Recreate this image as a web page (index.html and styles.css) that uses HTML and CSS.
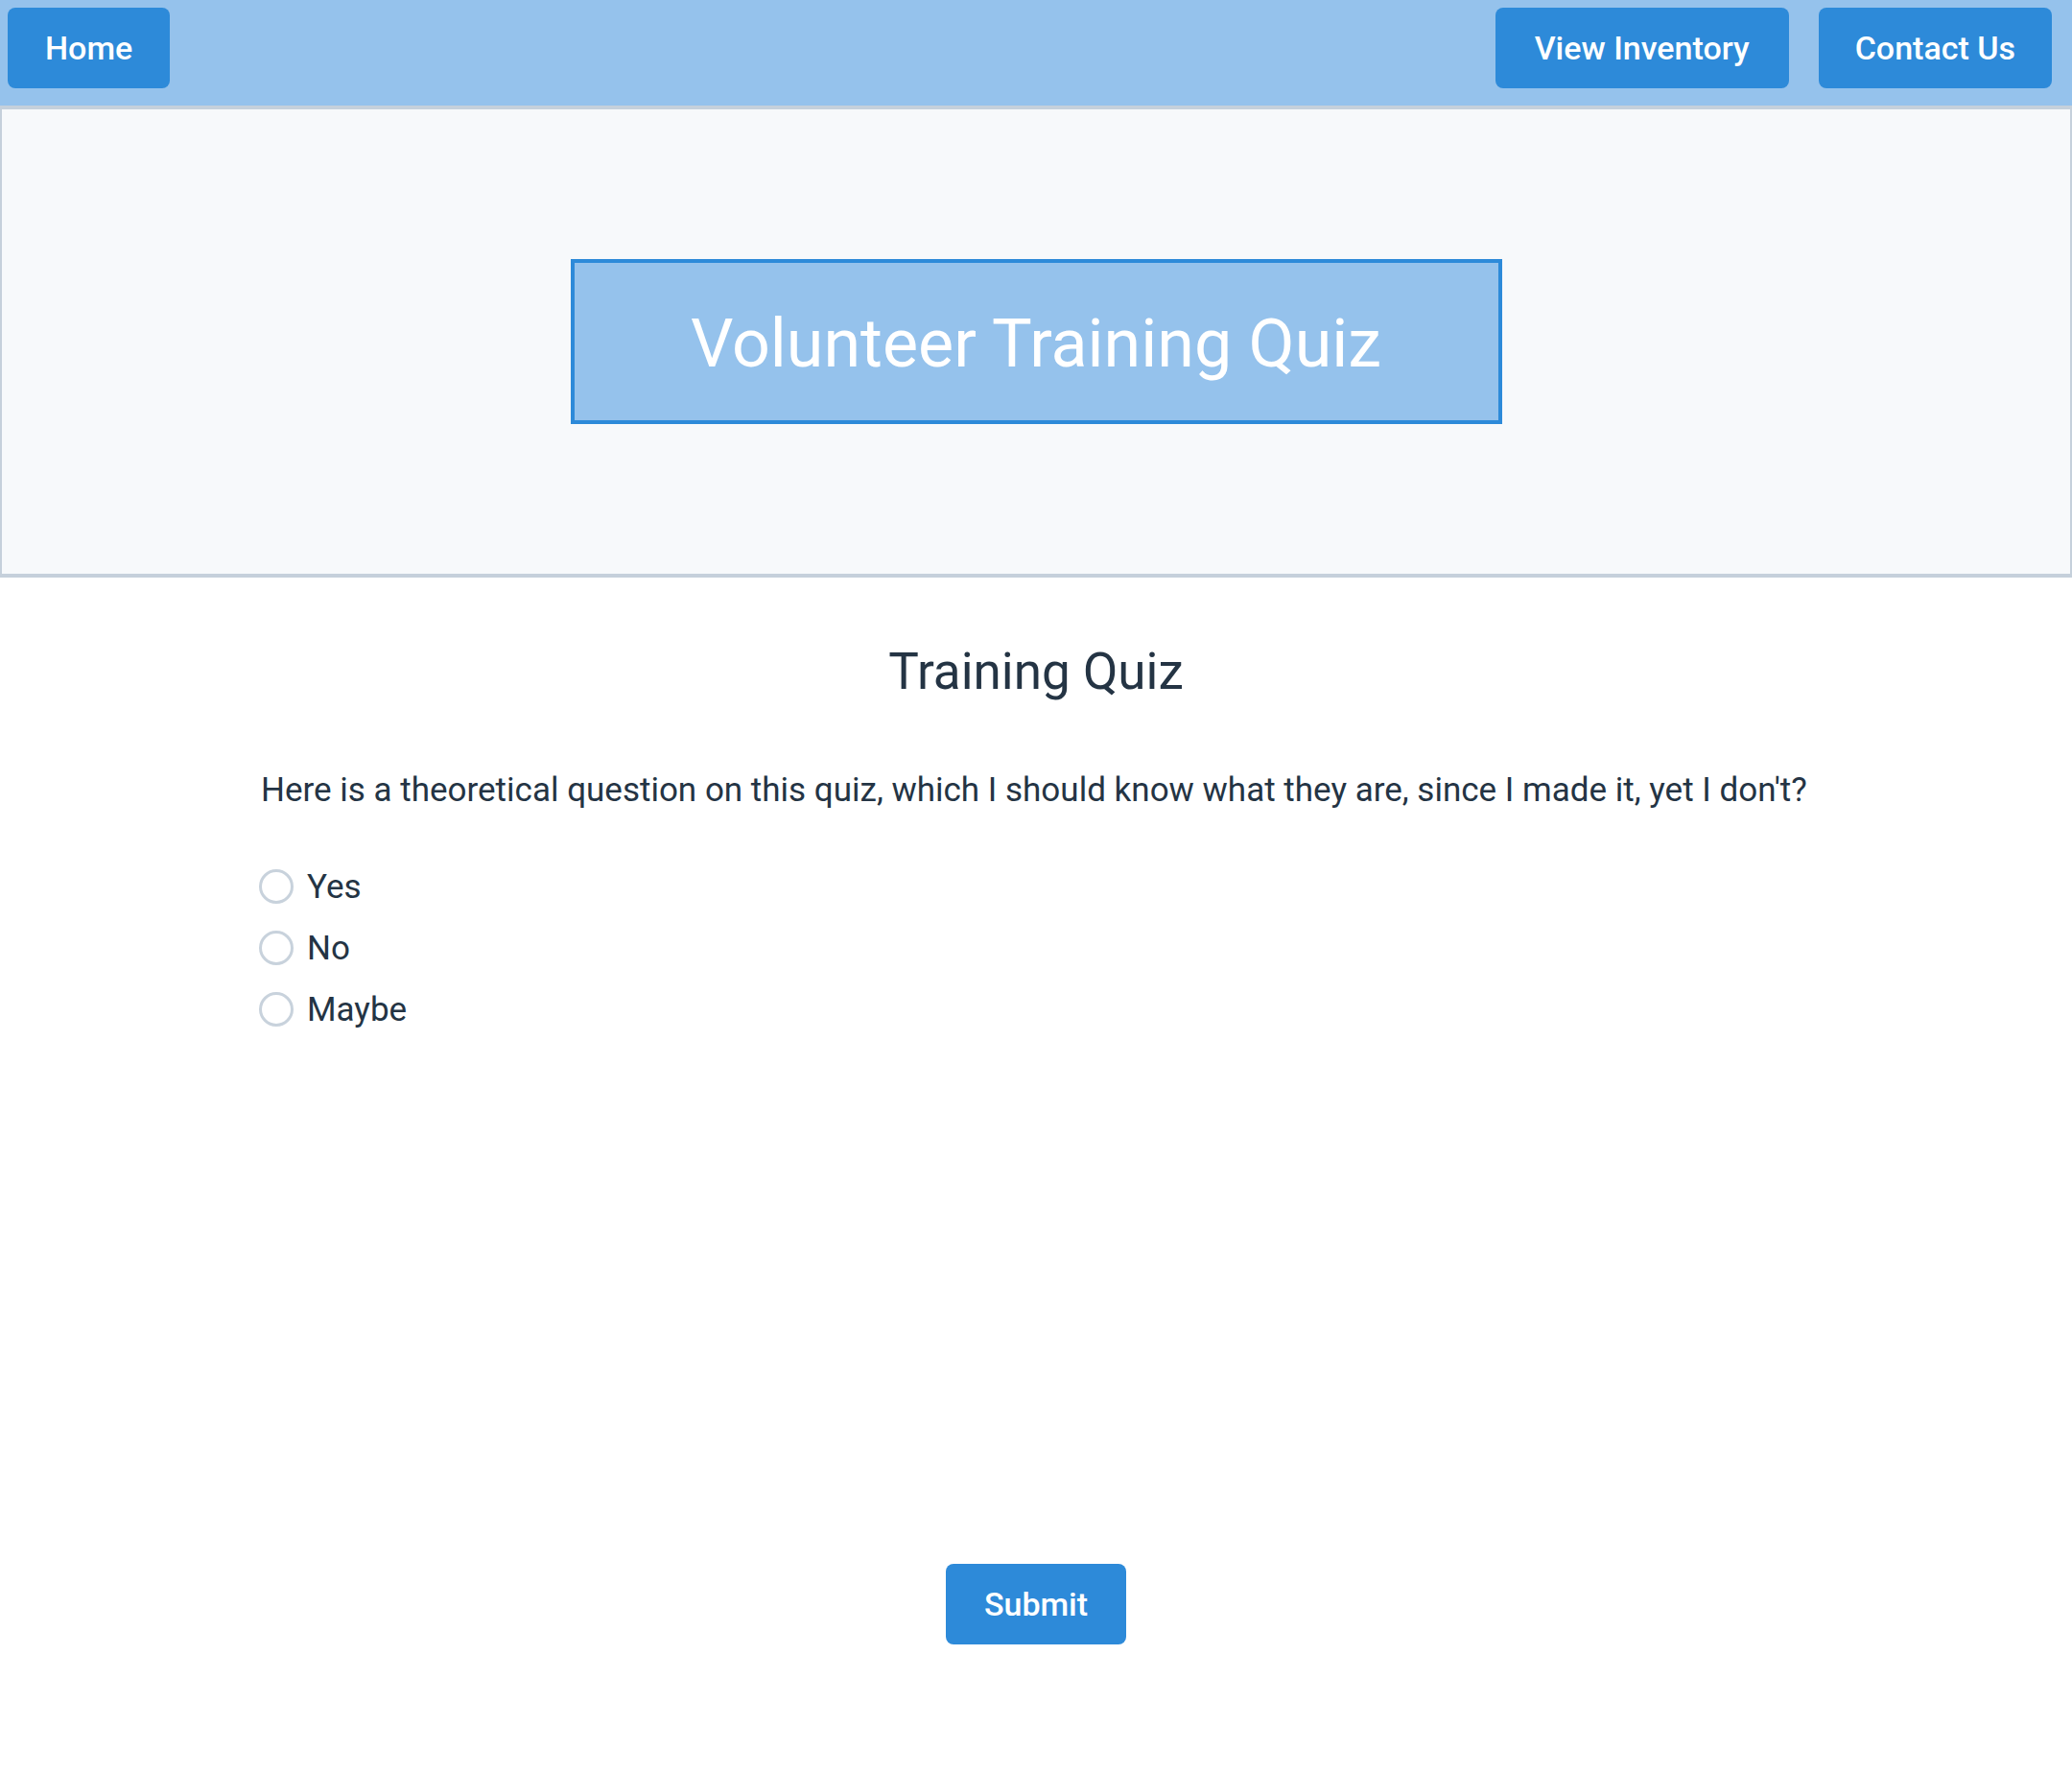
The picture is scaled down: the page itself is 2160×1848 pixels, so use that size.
FILE: index.html
```html
<!DOCTYPE html>
<html lang="en">
<head>
<meta charset="utf-8">
<title>Volunteer Training Quiz</title>
<link rel="stylesheet" href="styles.css">
</head>
<body>
<nav class="topnav">
  <a class="nav-btn nav-btn--home" href="#">Home</a>
  <div class="nav-right">
    <a class="nav-btn nav-btn--inventory" href="#">View Inventory</a>
    <a class="nav-btn nav-btn--contact" href="#">Contact Us</a>
  </div>
</nav>
<header class="hero">
  <div class="hero-title">
    <h1>Volunteer Training Quiz</h1>
  </div>
</header>
<main class="quiz">
  <h2 class="quiz-heading">Training Quiz</h2>
  <form class="quiz-form">
    <p class="question">Here is a theoretical question on this quiz, which I should know what they are, since I made it, yet I don't?</p>
    <div class="options">
      <label class="option"><input type="radio" name="q1" value="yes"><span>Yes</span></label>
      <label class="option"><input type="radio" name="q1" value="no"><span>No</span></label>
      <label class="option"><input type="radio" name="q1" value="maybe"><span>Maybe</span></label>
    </div>
    <div class="submit-row">
      <button type="button" class="submit-btn">Submit</button>
    </div>
  </form>
</main>
</body>
</html>
```

FILE: styles.css
```css
* {
  box-sizing: border-box;
}

html, body {
  margin: 0;
  padding: 0;
  background: #ffffff;
}

body {
  font-family: Roboto, "Liberation Sans", sans-serif;
  color: #243444;
  width: 2160px;
  min-height: 1848px;
}

.topnav {
  height: 110px;
  background: #95c2ec;
  display: flex;
  align-items: flex-start;
  justify-content: space-between;
  padding: 8px 21px 0 8px;
}

.nav-right {
  display: flex;
  gap: 31px;
}

.nav-btn {
  display: flex;
  align-items: center;
  justify-content: center;
  height: 84px;
  padding: 0 40px;
  background: #2d8ad9;
  color: #ffffff;
  border-radius: 8px;
  text-decoration: none;
  font-size: 34px;
  font-weight: 500;
  line-height: 1;
}

.nav-btn--home {
  padding: 0 39px;
}

.nav-btn--inventory {
  padding: 0 41px;
}

.nav-btn--contact {
  padding: 0 38px;
}

.hero {
  height: 492px;
  background: #f7f9fb;
  border: 2px solid #c5d0db;
  border-top-width: 4px;
  border-bottom-width: 4px;
  display: flex;
  align-items: center;
  justify-content: center;
}

.hero-title {
  width: 971px;
  height: 172px;
  background: #95c2ec;
  border: 4px solid #2d8ad9;
  display: flex;
  align-items: center;
  justify-content: center;
}

.hero-title h1 {
  margin: 0;
  font-size: 70px;
  font-weight: 400;
  color: #ffffff;
  line-height: 1;
  padding-top: 3px;
}

.quiz {
  width: 1616px;
  margin: 0 auto;
  padding-top: 68px;
}

.quiz-heading {
  margin: 0;
  text-align: center;
  font-size: 53px;
  line-height: 60px;
  font-weight: 400;
}

.question {
  margin: 73px 0 0 0;
  font-size: 35px;
  line-height: 42px;
  white-space: nowrap;
}

.options {
  margin-top: 47px;
  display: flex;
  flex-direction: column;
}

.option {
  height: 64px;
  display: flex;
  align-items: center;
  gap: 14px;
  font-size: 35px;
  margin-left: -2px;
}

.option input {
  appearance: none;
  -webkit-appearance: none;
  width: 36px;
  height: 36px;
  margin: 0;
  border: 3px solid #c8d2dc;
  border-radius: 50%;
  background: #ffffff;
}

.submit-row {
  display: flex;
  justify-content: center;
  margin-top: 546px;
}

.submit-btn {
  height: 84px;
  padding: 0 40px;
  background: #2d8ad9;
  color: #ffffff;
  border: none;
  border-radius: 8px;
  font-family: Roboto, "Liberation Sans", sans-serif;
  font-size: 34px;
  font-weight: 500;
}
```
